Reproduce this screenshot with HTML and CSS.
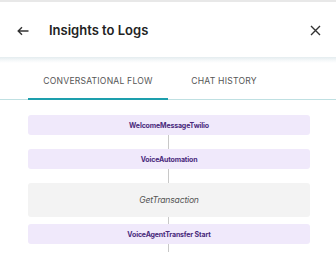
FILE: index.html
```html
<!DOCTYPE html>
<html>
<head>
<meta charset="utf-8">
<link rel="stylesheet" href="styles.css">
</head>
<body>
<div class="topline"></div>
<header class="header">
  <svg class="back" width="12" height="10" viewBox="0 0 12 10"><path d="M11.5 5H1.2M5 1.2L1.2 5L5 8.8" fill="none" stroke="#333" stroke-width="1.4"/></svg>
  <h1 class="title">Insights to Logs</h1>
  <svg class="close" width="11" height="11" viewBox="0 0 11 11"><path d="M1 1L10 10M10 1L1 10" fill="none" stroke="#333" stroke-width="1.4"/></svg>
</header>
<div class="shadow"></div>
<nav class="tabs">
  <div class="tab active">CONVERSATIONAL FLOW</div>
  <div class="tab">CHAT HISTORY</div>
</nav>
<main class="flow">
  <div class="node bot">WelcomeMessageTwilio</div>
  <div class="conn"></div>
  <div class="node bot">VoiceAutomation</div>
  <div class="conn"></div>
  <div class="node api">GetTransaction</div>
  <div class="conn short"></div>
  <div class="node bot">VoiceAgentTransfer Start</div>
  <div class="conn tail"></div>
</main>
</body>
</html>
```
FILE: styles.css
```css
* { box-sizing: border-box; }
body {
  margin: 0;
  background: #fff;
  font-family: Inter, Roboto, "Liberation Sans", sans-serif;
  overflow: hidden;
}
.topline { height: 2px; background: #e8e8e8; }
.header {
  height: 55px;
  display: flex;
  align-items: center;
  padding: 0 15px 0 17px;
}
.back { margin-top: 2px; }
.title {
  margin: 0 0 0 20px;
  font-size: 13px;
  font-weight: 600;
  color: #222;
  flex: 1;
}
.close { margin-top: 2px; }
.shadow {
  height: 6px;
  background: linear-gradient(#e4ecef, #f6f9fa 60%, #fff);
}
.tabs {
  display: flex;
  height: 37px;
  padding-left: 28px;
  border-bottom: 1px solid #bfe0e2;
}
.tab {
  display: flex;
  align-items: center;
  justify-content: center;
  font-size: 8.6px;
  letter-spacing: 0.2px;
  color: #555;
}
.tab.active {
  width: 140px;
  border-bottom: 2px solid #1d9fad;
  margin-bottom: -1px;
}
.tab:not(.active) { width: 112px; }
.flow {
  padding: 15px 26px 0 28px;
  display: flex;
  flex-direction: column;
  align-items: stretch;
}
.node {
  display: flex;
  align-items: center;
  justify-content: center;
  border-radius: 3px;
}
.node.bot {
  height: 20px;
  background: #f0e9fb;
  color: #4a2a7c;
  font-size: 7px;
  font-weight: 700;
  letter-spacing: -0.15px;
}
.node.api {
  height: 34px;
  background: #f3f3f3;
  color: #555;
  font-size: 8.6px;
  letter-spacing: -0.2px;
  font-style: italic;
}
.conn {
  width: 1px;
  height: 14px;
  background: #c8c8c8;
  align-self: center;
  margin-left: -2px;
}
.conn.short { height: 7px; }
.conn.tail { height: 8px; }
```
